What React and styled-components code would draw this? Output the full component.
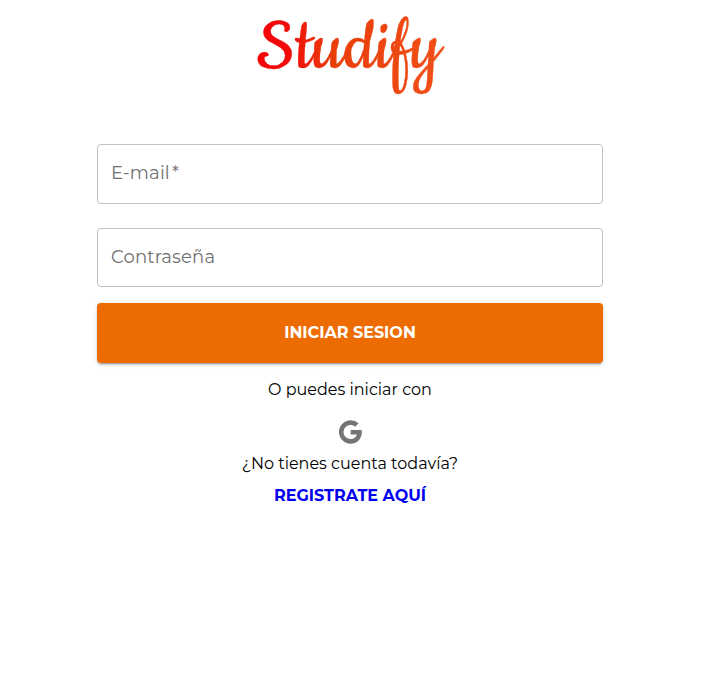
import React from 'react';
import styled, { createGlobalStyle } from 'styled-components';

const GlobalStyle = createGlobalStyle`
  * { box-sizing: border-box; }
  body { margin: 0; background: #fff; font-family: Montserrat, Inter, sans-serif; }
`;

const Page = styled.main`
  width: 700px;
  min-height: 691px;
  display: flex;
  flex-direction: column;
  align-items: center;
`;

const Logo = styled.svg`
  display: block;
  width: 200px;
  height: 100px;
  margin: 4px 0 40px;
  overflow: visible;
  font-family: Cookie, "Dancing Script", cursive;
  font-size: 83px;
  stroke-width: 0.35px;
  stroke-linejoin: round;
`;

const Form = styled.form`
  width: 506px;
  display: flex;
  flex-direction: column;
`;

const Field = styled.label`
  height: ${(p) => p.$height}px;
  margin-bottom: ${(p) => p.$gap}px;
  padding: 0 13px 2px;
  display: flex;
  align-items: center;
  border: 1px solid #c1c1c1;
  border-radius: 4px;
  color: #707070;
  font-size: 18px;
  letter-spacing: 0.15px;
`;

const Required = styled.span`
  margin-left: 2px;
`;

const Submit = styled.button`
  height: 60px;
  padding: 0 0 2px;
  border: 0;
  border-radius: 4px;
  background: #ed6c02;
  color: #fff;
  font: 700 16px Montserrat, Inter, sans-serif;
  box-shadow: 0 3px 1px -2px rgba(0, 0, 0, 0.2), 0 2px 2px rgba(0, 0, 0, 0.14), 0 1px 5px rgba(0, 0, 0, 0.12);
`;

const Line = styled.p`
  margin: ${(p) => p.$top}px 0 0;
  color: #000;
  font-size: 16px;
  line-height: 20px;
`;

const GoogleIcon = styled.svg`
  display: block;
  width: 28px;
  height: 28px;
  margin-top: 18px;
  fill: #757575;
`;

const RegisterLink = styled.a`
  margin-top: 12px;
  color: #0000ee;
  font-size: 16px;
  font-weight: 700;
  line-height: 20px;
  text-decoration: none;
`;

export default function App() {
  return (
    <>
      <GlobalStyle />
      <Page>
        <Logo viewBox="0 0 200 100" role="img" aria-label="Studify">
          <defs>
            <linearGradient id="brand" x1="0" y1="0" x2="1" y2="0">
              <stop offset="0" stopColor="#f50006" />
              <stop offset="0.16" stopColor="#f30a0a" />
              <stop offset="0.4" stopColor="#e93d08" />
              <stop offset="1" stopColor="#f15019" />
            </linearGradient>
          </defs>
          <text x="6.7" y="63.7" textLength="184" fill="url(#brand)" stroke="url(#brand)">Studify</text>
        </Logo>
        <Form onSubmit={(e) => e.preventDefault()}>
          <Field $height={60} $gap={24}>E-mail<Required>*</Required></Field>
          <Field $height={59} $gap={16}>Contraseña</Field>
          <Submit type="submit">INICIAR SESION</Submit>
        </Form>
        <Line $top={17}>O puedes iniciar con</Line>
        <GoogleIcon viewBox="0 0 24 24" aria-label="Google">
          <path d="M12.545 10.239v3.821h5.445c-.712 2.315-2.647 3.972-5.445 3.972a6.033 6.033 0 1 1 0-12.064c1.498 0 2.866.549 3.921 1.453l2.814-2.814A9.969 9.969 0 0 0 12.545 2C7.021 2 2.543 6.477 2.543 12s4.478 10 10.002 10c8.396 0 10.249-7.85 9.426-11.748z" />
        </GoogleIcon>
        <Line $top={8}>¿No tienes cuenta todavía?</Line>
        <RegisterLink href="#registro">REGISTRATE AQUÍ</RegisterLink>
      </Page>
    </>
  );
}
